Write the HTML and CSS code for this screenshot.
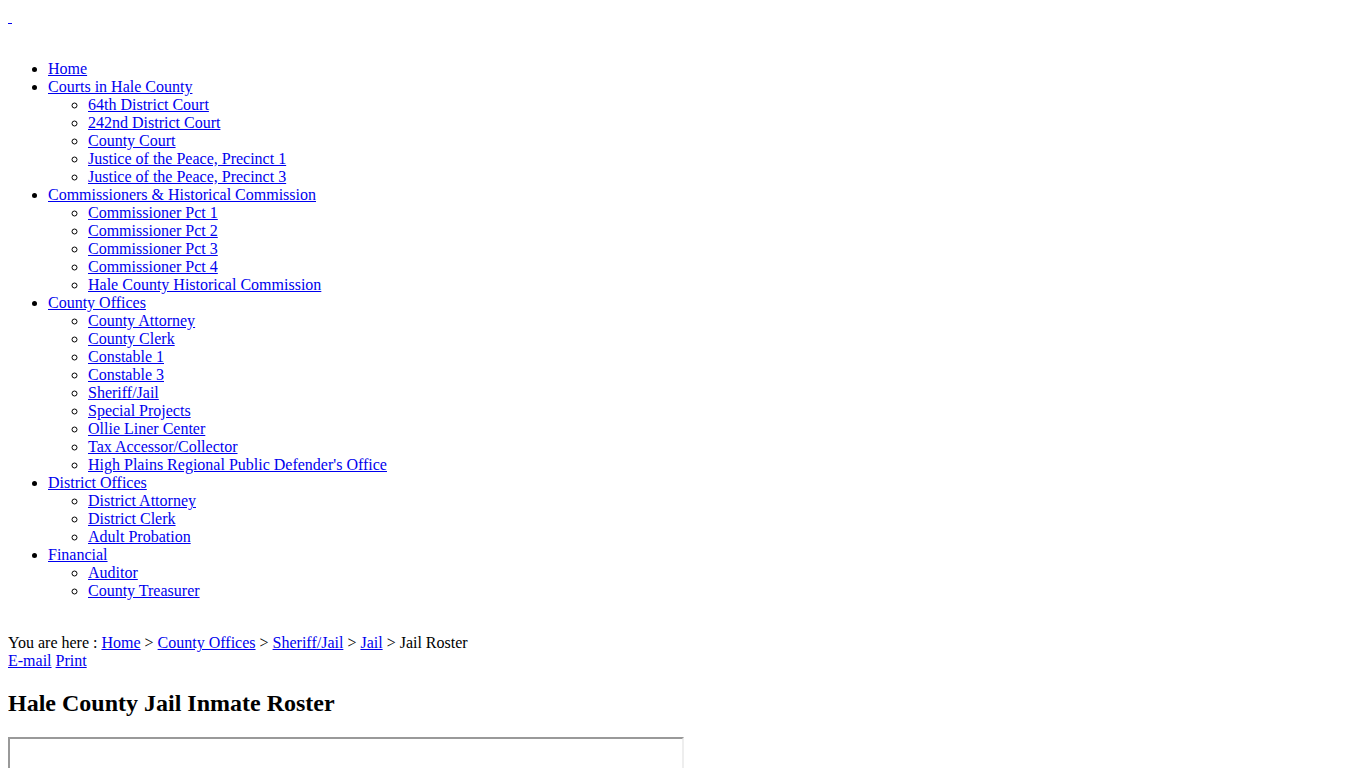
FILE: index.html
```html
<!DOCTYPE html>
<html lang="en">
<head>
    <meta charset="UTF-8">
    <meta name="viewport" content="width=device-width, initial-scale=1.0">
    <title>Jail Roster</title>
    <link rel="stylesheet" href="styles.css">
</head>
<body>
    <div class="logo"><a href="#">&nbsp;</a></div>
    <br>
    <ul class="menu">
        <li><a href="#">Home</a></li>
        <li><a href="#">Courts in Hale County</a>
            <ul>
                <li><a href="#">64th District Court</a></li>
                <li><a href="#">242nd District Court</a></li>
                <li><a href="#">County Court</a></li>
                <li><a href="#">Justice of the Peace, Precinct 1</a></li>
                <li><a href="#">Justice of the Peace, Precinct 3</a></li>
            </ul>
        </li>
        <li><a href="#">Commissioners &amp; Historical Commission</a>
            <ul>
                <li><a href="#">Commissioner Pct 1</a></li>
                <li><a href="#">Commissioner Pct 2</a></li>
                <li><a href="#">Commissioner Pct 3</a></li>
                <li><a href="#">Commissioner Pct 4</a></li>
                <li><a href="#">Hale County Historical Commission</a></li>
            </ul>
        </li>
        <li><a href="#">County Offices</a>
            <ul>
                <li><a href="#">County Attorney</a></li>
                <li><a href="#">County Clerk</a></li>
                <li><a href="#">Constable 1</a></li>
                <li><a href="#">Constable 3</a></li>
                <li><a href="#">Sheriff/Jail</a></li>
                <li><a href="#">Special Projects</a></li>
                <li><a href="#">Ollie Liner Center</a></li>
                <li><a href="#">Tax Accessor/Collector</a></li>
                <li><a href="#">High Plains Regional Public Defender's Office</a></li>
            </ul>
        </li>
        <li><a href="#">District Offices</a>
            <ul>
                <li><a href="#">District Attorney</a></li>
                <li><a href="#">District Clerk</a></li>
                <li><a href="#">Adult Probation</a></li>
            </ul>
        </li>
        <li><a href="#">Financial</a>
            <ul>
                <li><a href="#">Auditor</a></li>
                <li><a href="#">County Treasurer</a></li>
            </ul>
        </li>
    </ul>
    <br>
    <div class="breadcrumbs">You are here : <a href="#">Home</a> &gt; <a href="#">County Offices</a> &gt; <a href="#">Sheriff/Jail</a> &gt; <a href="#">Jail</a> &gt; Jail Roster</div>
    <div class="tools"><a href="#">E-mail</a> <a href="#">Print</a></div>
    <h2>Hale County Jail Inmate Roster</h2>
    <iframe class="roster" title="Roster"></iframe>
</body>
</html>
```

FILE: styles.css
```css
body {
    font-family: "Liberation Serif", "Times New Roman", serif;
    font-size: 16px;
}

a {
    color: #0000ee;
}

.roster {
    display: block;
    width: 672px;
    height: 400px;
    border: 2px solid #eee;
    border-top-color: #999;
    border-left-color: #999;
}
```
